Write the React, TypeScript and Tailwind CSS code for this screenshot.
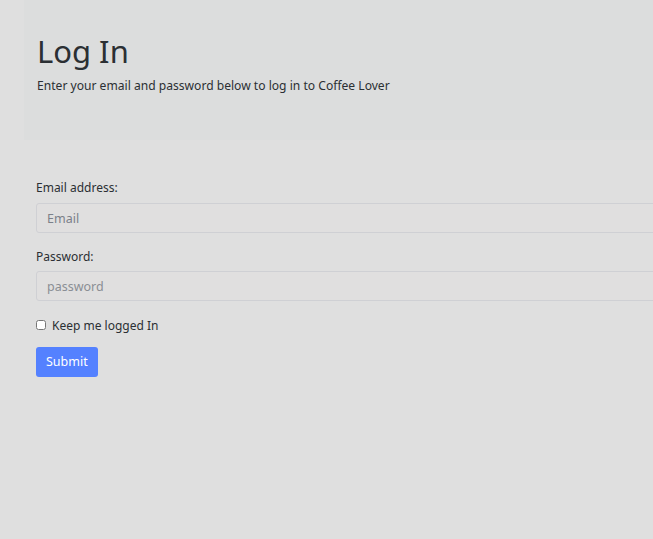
export default function App() {
  return (
    <div
      className="min-h-screen w-full overflow-hidden bg-[#dfdfdf] text-[#2b2f33]"
      style={{ fontFamily: "'Noto Sans', 'Open Sans', sans-serif" }}
    >
      <div className="ml-6 w-[720px]">
        <div className="bg-[#dcdddd] px-[13px] pt-[31px] pb-[44px]">
          <h1 className="text-[31px] leading-[40px] font-normal">Log In</h1>
          <p className="mt-[5px] text-[12.1px] leading-[20px]">
            Enter your email and password below to log in to Coffee Lover
          </p>
        </div>

        <form className="px-3 pt-[38px]">
          <div className="mb-[14px]">
            <label className="block text-[12px] leading-[20px] mb-[5px]">Email address:</label>
            <input
              type="email"
              placeholder="Email"
              className="block w-full h-[30px] rounded-[3px] border border-[#cfd0d4] bg-[#e0dfdf] px-[10px] text-[12.5px] placeholder:text-[#7b8089] outline-none"
            />
          </div>
          <div className="mb-[15px]">
            <label className="block text-[12px] leading-[20px] mb-[4px]">Password:</label>
            <input
              type="password"
              placeholder="password"
              className="block w-full h-[30px] rounded-[3px] border border-[#cfd0d4] bg-[#e0dfdf] px-[10px] text-[12.5px] placeholder:text-[#8a8e94] outline-none"
            />
          </div>
          <label className="flex items-center gap-[6px] text-[12px] leading-[20px]">
            <input type="checkbox" className="w-[10px] h-[10px] -mt-[2px]" />
            Keep me logged In
          </label>
          <button
            type="button"
            className="mt-[11px] h-[30px] px-[10px] rounded-[3px] bg-[#5481ff] text-[12.5px] text-white"
          >
            Submit
          </button>
        </form>
      </div>
    </div>
  );
}
